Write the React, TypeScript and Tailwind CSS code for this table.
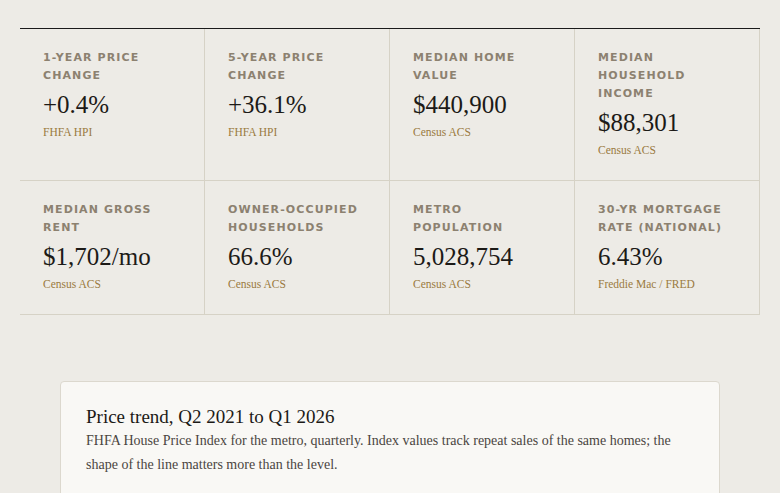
import React from 'react';

interface Stat {
  label: string;
  value: string;
  source: string;
}

const stats: Stat[] = [
  { label: '1-Year Price Change', value: '+0.4%', source: 'FHFA HPI' },
  { label: '5-Year Price Change', value: '+36.1%', source: 'FHFA HPI' },
  { label: 'Median Home Value', value: '$440,900', source: 'Census ACS' },
  { label: 'Median Household Income', value: '$88,301', source: 'Census ACS' },
  { label: 'Median Gross Rent', value: '$1,702/mo', source: 'Census ACS' },
  { label: 'Owner-Occupied Households', value: '66.6%', source: 'Census ACS' },
  { label: 'Metro Population', value: '5,028,754', source: 'Census ACS' },
  { label: '30-Yr Mortgage Rate (National)', value: '6.43%', source: 'Freddie Mac / FRED' },
];

export default function App() {
  return (
    <div className="min-h-screen bg-[#edebe6] pt-[28px] font-['Liberation_Serif',serif] text-[#1c1a17]">
      {/* Stats grid */}
      <div className="mx-[20px] grid grid-cols-4 border-t border-[#1a1a1a]">
        {stats.map((s) => (
          <div key={s.label} className="border-r border-b border-[#d6d2c6] pl-[23px] pr-[22px] pt-[20px] pb-[22px]">
            <div className="font-['DejaVu_Sans',sans-serif] text-[11px] font-bold uppercase leading-[18px] tracking-[0.1em] text-[#8c8170]">
              {s.label}
            </div>
            <div className="mt-[5px] text-[25px] leading-[30px] text-[#1c1a17]">{s.value}</div>
            <div className="mt-[4px] text-[11.5px] leading-[16px] text-[#9a7a3e]">{s.source}</div>
          </div>
        ))}
      </div>

      {/* Chart card */}
      <div className="mx-auto mt-[66px] w-[660px] rounded-[4px] border border-[#dcd8ce] bg-[#f9f8f5] px-[25px] pt-[24px] pb-6">
        <h2 className="text-[19px] leading-[1.2] font-normal text-[#1c1a17]">Price trend, Q2 2021 to Q1 2026</h2>
        <p className="text-[14px] leading-[24px] text-[#4a453f]">
          FHFA House Price Index for the metro, quarterly. Index values track repeat sales of the same homes; the
          shape of the line matters more than the level.
        </p>
        <div className="h-[200px]" />
      </div>
    </div>
  );
}
